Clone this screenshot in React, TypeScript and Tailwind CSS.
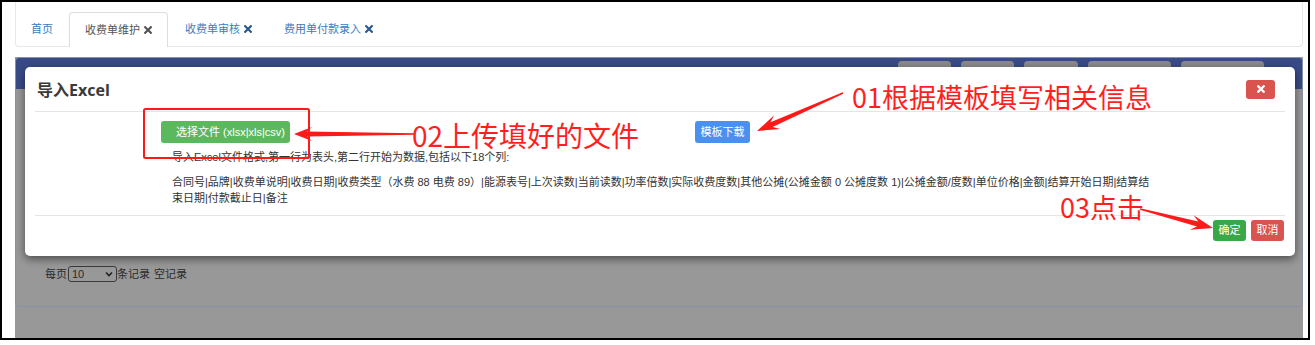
import React from "react";

type Pt = [number, number];

function arrowPoints(x1: number, y1: number, x2: number, y2: number, L: number, hw: number, w0: number, w1: number): string {
  const dx = x2 - x1;
  const dy = y2 - y1;
  const len = Math.hypot(dx, dy);
  const ux = dx / len;
  const uy = dy / len;
  const nx = -uy;
  const ny = ux;
  const bx = x2 - ux * L;
  const by = y2 - uy * L;
  const sx = x2 - ux * L * 0.72;
  const sy = y2 - uy * L * 0.72;
  const pts: Pt[] = [
    [x1 + (nx * w0) / 2, y1 + (ny * w0) / 2],
    [sx + (nx * w1) / 2, sy + (ny * w1) / 2],
    [bx + nx * hw, by + ny * hw],
    [x2, y2],
    [bx - nx * hw, by - ny * hw],
    [sx - (nx * w1) / 2, sy - (ny * w1) / 2],
    [x1 - (nx * w0) / 2, y1 - (ny * w0) / 2],
  ];
  return pts.map((p) => `${p[0].toFixed(1)},${p[1].toFixed(1)}`).join(" ");
}

function TabX({ color }: { color: string }) {
  return (
    <svg width="8" height="8" viewBox="0 0 8 8" className="ml-[4px] inline-block">
      <path d="M1.2 1.2 L6.8 6.8 M6.8 1.2 L1.2 6.8" stroke={color} strokeWidth="2.2" strokeLinecap="square" />
    </svg>
  );
}

export default function App() {
  const headerBtns = [53, 53, 54, 83, 83];
  return (
    <div className="relative w-[1315px] h-[345px] bg-white overflow-hidden font-['Liberation_Sans','Noto_Sans_CJK_SC',sans-serif]">
      <div className="w-[1310px] h-[340px] border-2 border-black pl-[13px] pr-[5px] flex flex-col">
        {/* tab bar */}
        <div className="h-[45px] flex items-end border-x border-b border-[#e8e8e8] rounded-b-[4px] shrink-0">
          <div className="h-[34px] px-[15px] mr-[1px] flex items-center text-[11px] text-[#3a7bbf]">首页</div>
          <div className="h-[35px] -mb-px px-[15px] mr-[2px] flex items-center text-[11px] text-[#555] bg-white border border-b-0 border-[#dddddd] rounded-t-[4px]">
            收费单维护
            <TabX color="#555555" />
          </div>
          <div className="h-[34px] px-[15px] mr-[2px] flex items-center text-[11px] text-[#3a7bbf]">
            收费单审核
            <TabX color="#2a5a8e" />
          </div>
          <div className="h-[34px] px-[15px] flex items-center text-[11px] text-[#3a7bbf]">
            费用单付款录入
            <TabX color="#2a5a8e" />
          </div>
        </div>

        {/* iframe area under overlay */}
        <div className="relative mt-[10px] h-[281px] bg-[#989898]">
          <div className="h-[250px] rounded-[4px] border border-[#8792a8] overflow-hidden flex flex-col">
            <div className="h-[31px] bg-[#394b87] flex justify-end gap-[10px] pr-[38px] pt-[3px] shrink-0">
              {headerBtns.map((w, i) => (
                <div key={i} className="h-[20px] rounded-[4px] bg-[#8b8b8b]" style={{ width: w }} />
              ))}
            </div>
            <div className="pl-[29px] pt-[177px] flex items-center text-[11px] text-[#2a2a2a]">
              <span>每页</span>
              <div className="ml-[1px] w-[49px] h-[16px] border border-[#3a3a3a] rounded-[3px] flex items-center justify-between px-[3px]">
                <span className="leading-none">10</span>
                <svg width="8" height="6" viewBox="0 0 8 6">
                  <path d="M1 1.5 L4 4.5 L7 1.5" stroke="#222" strokeWidth="1.6" fill="none" />
                </svg>
              </div>
              <span>条记录</span>
              <span className="ml-[4px]">空记录</span>
            </div>
          </div>

          {/* modal */}
          <div className="absolute left-[10px] top-[10px] w-[1270px] h-[189px] bg-white rounded-[5px] shadow-[0_3px_9px_rgba(0,0,0,0.5)] flex flex-col">
            <div className="mx-[10px] h-[45px] px-[2px] border-b border-[#e5e5e5] flex items-center justify-between shrink-0">
              <span className="text-[16px] font-bold text-[#3a3a3a] font-['Open_Sans','Noto_Sans_CJK_SC',sans-serif] mt-[2px]">导入Excel</span>
              <div className="mr-[8px] w-[29px] h-[19px] rounded-[3px] bg-[#d9534f] flex items-center justify-center">
                <svg width="8" height="8" viewBox="0 0 8 8">
                  <path d="M1.3 1.3 L6.7 6.7 M6.7 1.3 L1.3 6.7" stroke="#ffffff" strokeWidth="2.3" strokeLinecap="square" />
                </svg>
              </div>
            </div>
            <div className="pt-[9px] text-[11px] text-[#333]">
              <div className="flex h-[22px] pl-[136px]">
                <div className="w-[129px] h-[22px] rounded-[3px] bg-[#5cb85c] text-white pl-[15px] flex items-center whitespace-nowrap">
                  选择文件 (xlsx|xls|csv)
                </div>
                <div className="ml-[405px] w-[55px] h-[22px] rounded-[3px] bg-[#4a90f0] text-white flex items-center justify-center">
                  模板下载
                </div>
              </div>
              <div className="pl-[147px] mt-[6px] leading-[16px] whitespace-nowrap">
                导入Excel文件格式,第一行为表头,第二行开始为数据,包括以下18个列:
              </div>
              <div className="pl-[147px] mt-[9px] leading-[16px] whitespace-nowrap">
                合同号|品牌|收费单说明|收费日期|收费类型（水费 88 电费 89）|能源表号|上次读数|当前读数|功率倍数|实际收费度数|其他公摊(公摊金额 0 公摊度数 1)|公摊金额/度数|单位价格|金额|结算开始日期|结算结
                <br />
                束日期|付款截止日|备注
              </div>
            </div>
            <div className="mx-[10px] mt-[9px] border-t border-[#e5e5e5] pt-[4px] flex justify-end gap-[5px] pr-[1px]">
              <div className="w-[33px] h-[21px] rounded-[3px] bg-[#3aa848] text-white text-[11px] flex items-center justify-center">确定</div>
              <div className="w-[33px] h-[21px] rounded-[3px] bg-[#d9534f] text-white text-[11px] flex items-center justify-center">取消</div>
            </div>
          </div>
        </div>
      </div>

      {/* annotations */}
      <svg className="absolute left-0 top-0 pointer-events-none" width="1315" height="345" viewBox="0 0 1315 345">
        <rect x="144" y="109" width="165" height="49" rx="1.5" fill="none" stroke="#ff1a1a" strokeWidth="2" />
        <polygon points={arrowPoints(414, 134, 294, 134, 18, 7, 1.5, 5)} fill="#ff1a1a" />
        <polygon points={arrowPoints(843, 93, 757, 131, 22, 7.5, 1.5, 5)} fill="#ff1a1a" />
        <polygon points={arrowPoints(1140, 209, 1213, 228, 22, 7.5, 1.5, 5)} fill="#ff1a1a" />
      </svg>
      <div className="absolute left-[852px] top-[83px] text-[27px] leading-[27px] text-[#ff1f1f] whitespace-nowrap font-['Noto_Sans_CJK_SC',sans-serif]">
        01根据模板填写相关信息
      </div>
      <div className="absolute left-[412px] top-[121px] text-[28px] leading-[28px] text-[#ff1f1f] whitespace-nowrap font-['Noto_Sans_CJK_SC',sans-serif]">
        02上传填好的文件
      </div>
      <div className="absolute left-[1060px] top-[193px] text-[27px] leading-[27px] text-[#ff1f1f] whitespace-nowrap font-['Noto_Sans_CJK_SC',sans-serif]">
        03点击
      </div>
    </div>
  );
}
